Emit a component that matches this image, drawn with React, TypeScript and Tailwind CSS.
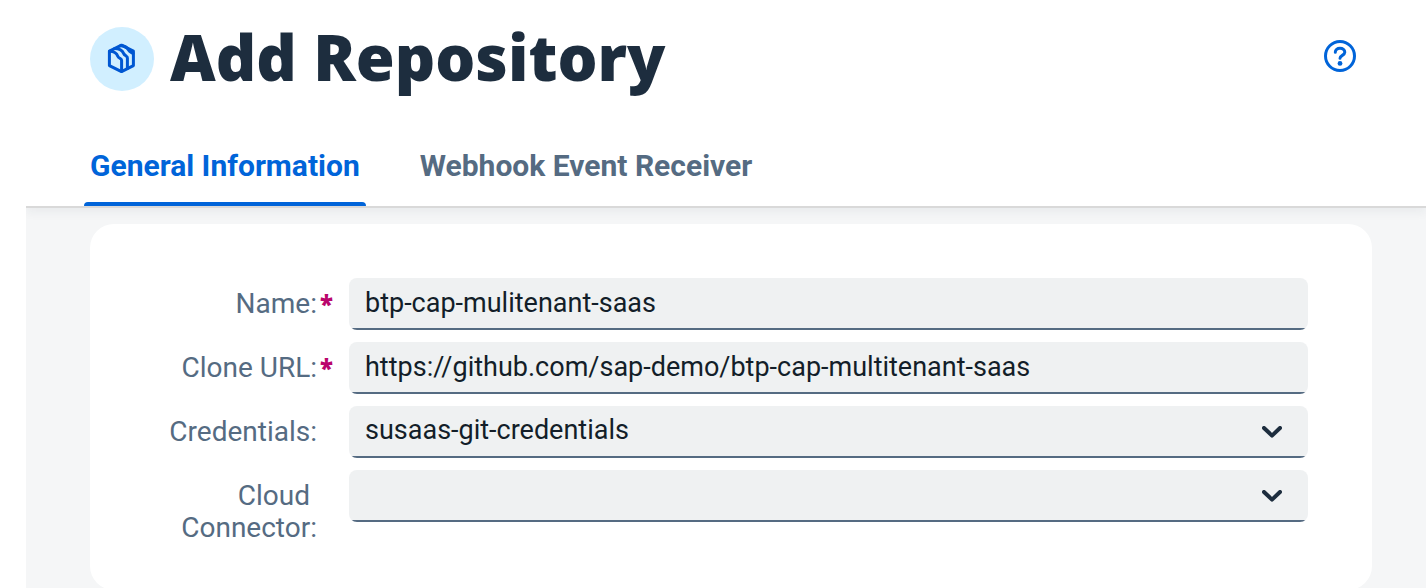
import { useState } from 'react';
import type { ReactNode } from 'react';

const fieldClass =
  "block h-[52px] w-full appearance-none rounded-lg bg-[#eff1f2] bg-[linear-gradient(#556b82,#556b82)] bg-[length:100%_2px] bg-bottom bg-no-repeat px-4 text-[27px] text-[#131e29] outline-none";

function RepositoryIcon() {
  return (
    <svg viewBox="0 0 32 32" className="size-8" fill="none" stroke="#0057d2" strokeWidth="3" strokeLinejoin="round" strokeLinecap="round" aria-hidden="true">
      <path d="M15.5 2.2 27.4 8.2V22.6L15.5 28.6 3.4 22.6V8.2Z" />
      <path d="M3.8 8.2C8.5 8.4 10.8 10.4 11.8 13.2C12.4 14.8 13.4 15 14.6 15.8C15.3 16.2 15.6 16.8 15.6 17.6V28" />
      <path d="M8.6 5.6C13.8 5.6 16.4 7.6 17.6 10.4C18.2 12 19.2 12.4 20.4 13.2C21.1 13.6 21.4 14.2 21.4 15V25.4" />
      <path d="M14.4 2.8C18.8 2.8 21.4 4.6 22.6 7.2C23.4 9 25 9.4 27 10.4" />
    </svg>
  );
}

function HelpIcon() {
  return (
    <svg viewBox="0 0 32 32" className="size-8" fill="none" stroke="#0064d9" strokeWidth="3" strokeLinecap="round" strokeLinejoin="round" aria-hidden="true">
      <circle cx="16" cy="16" r="14.5" />
      <path d="M11.3 12.3C11.3 9.9 13.2 8.3 16 8.3S20.8 10 20.8 12.3C20.8 15.3 16 15.4 16 18.2" />
      <circle cx="16" cy="23.4" r="2.4" fill="#0064d9" stroke="none" />
    </svg>
  );
}

function Chevron() {
  return (
    <svg viewBox="0 0 20 12" className="pointer-events-none absolute top-5 right-[26px] h-3 w-5" fill="none" stroke="#1d2d3e" strokeWidth="4" strokeLinecap="round" strokeLinejoin="round" aria-hidden="true">
      <path d="M2 2 10 9.6 18 2" />
    </svg>
  );
}

function Field({ id, label, required, children }: { id: string; label: string; required?: boolean; children: ReactNode }) {
  return (
    <div className="grid grid-cols-[179px_1fr] gap-4">
      <div className="flex justify-end pt-[10px] text-right text-[28px] leading-8 text-[#556b82]">
        <label htmlFor={id} className="whitespace-break-spaces">{`${label}:`}</label>
        <span className="w-4 shrink-0 pl-[3px] font-['Noto_Sans',sans-serif] text-2xl leading-8 font-black text-[#ba066c]" aria-hidden="true">{required ? '*' : ''}</span>
      </div>
      <div className="relative">{children}</div>
    </div>
  );
}

const tabs = ['General Information', 'Webhook Event Receiver'];

export default function App() {
  const [active, setActive] = useState(tabs[0]);
  return (
    <div className="flex min-h-screen flex-col bg-white pl-[26px] font-[Roboto,'Noto_Sans',sans-serif]">
      <header className="relative border-b-2 border-[#d9d9d9] bg-white shadow-[0_4px_10px_rgba(34,53,72,0.06)] [clip-path:inset(0_0_-20px_0)]">
        <div className="flex items-center pt-[27px] pr-[70px] pl-16">
          <div className="flex size-16 items-center justify-center rounded-full bg-[#d1efff]">
            <RepositoryIcon />
          </div>
          <h1 className="ml-4 pb-1 font-['Noto_Sans',sans-serif] text-[63px] leading-[60px] font-black text-[#1d2d3e]">Add Repository</h1>
          <button type="button" aria-label="Help" className="mb-1.5 ml-auto">
            <HelpIcon />
          </button>
        </div>
        <div role="tablist" className="flex gap-12 pt-[33px] pl-[58px]">
          {tabs.map((tab) => (
            <button
              key={tab}
              type="button"
              role="tab"
              aria-selected={active === tab}
              onClick={() => setActive(tab)}
              className={`relative h-[82px] px-1.5 text-[30px] font-bold ${active === tab ? 'text-[#0064d9]' : 'text-[#556b82]'}`}
            >
              {tab}
              {active === tab && <span className="absolute inset-x-0 bottom-0 h-1 rounded-t bg-[#0064d9]" />}
            </button>
          ))}
        </div>
      </header>
      <main className="grow bg-[#f5f6f7] pt-4 pr-[54px] pl-16">
        <form className="flex flex-col gap-3 rounded-3xl bg-white px-16 pt-[54px] pb-[46px]">
          <Field id="name" label="Name" required>
            <input id="name" required defaultValue="btp-cap-mulitenant-saas" className={`${fieldClass} pb-0.5`} />
          </Field>
          <Field id="clone-url" label="Clone URL" required>
            <input id="clone-url" required defaultValue="https://github.com/sap-demo/btp-cap-multitenant-saas" className={`${fieldClass} pb-0.5`} />
          </Field>
          <Field id="credentials" label="Credentials">
            <select id="credentials" className={`${fieldClass} pb-1`}>
              <option>susaas-git-credentials</option>
            </select>
            <Chevron />
          </Field>
          <Field id="cloud-connector" label="Cloud Connector">
            <select id="cloud-connector" className={`${fieldClass} pb-1`}>
              <option></option>
            </select>
            <Chevron />
          </Field>
        </form>
      </main>
    </div>
  );
}
